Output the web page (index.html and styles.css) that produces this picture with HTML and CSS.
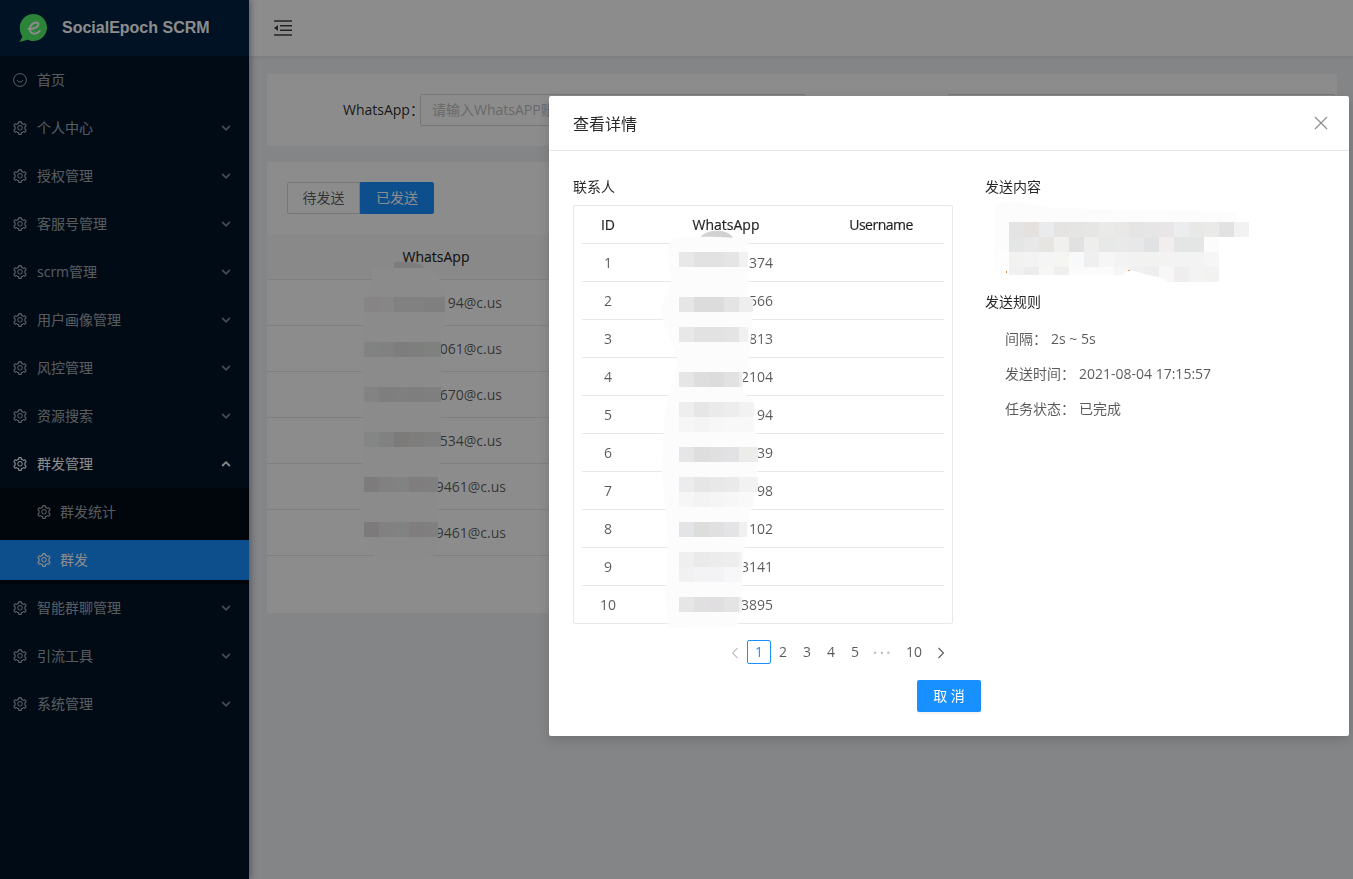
FILE: index.html
```html
<!DOCTYPE html>
<html lang="en">
<head>
    <meta charset="UTF-8">
    <title>SocialEpoch SCRM</title>
    <link rel="stylesheet" href="styles.css">
</head>
<body>

    <svg class="icon-defs" width="0" height="0">
        <symbol id="gear" viewBox="64 64 896 896">
            <path fill="currentColor" d="M924.8 625.7l-65.500-56c3.100-19 4.700-38.400 4.700-57.800s-1.600-38.800-4.700-57.800l65.500-56a32.030 32.030 0 0 0 9.300-35.200l-.9-2.600a443.740 443.740 0 0 0-79.700-137.900l-1.800-2.100a32.120 32.120 0 0 0-35.100-9.500l-81.300 28.900c-30-24.600-63.500-44-99.700-57.600l-15.700-85a32.050 32.050 0 0 0-25.800-25.700l-2.700-.5c-52.100-9.400-106.900-9.400-159 0l-2.700.5a32.050 32.050 0 0 0-25.800 25.700l-15.800 85.400a351.860 351.860 0 0 0-99 57.400l-81.900-29.100a32 32 0 0 0-35.100 9.500l-1.800 2.100a446.020 446.020 0 0 0-79.700 137.900l-.9 2.600c-4.500 12.500-.8 26.500 9.300 35.200l66.300 56.600c-3.100 18.800-4.600 38-4.600 57.100 0 19.200 1.500 38.400 4.600 57.100L99 625.500a32.030 32.030 0 0 0-9.300 35.200l.9 2.600c18.100 50.400 44.900 96.900 79.700 137.900l1.800 2.100a32.120 32.120 0 0 0 35.100 9.500l81.900-29.100c29.800 24.500 63.100 43.900 99 57.400l15.800 85.400a32.050 32.050 0 0 0 25.800 25.700l2.700.5a449.400 449.400 0 0 0 159 0l2.700-.5a32.050 32.050 0 0 0 25.800-25.700l15.700-85a350 350 0 0 0 99.700-57.600l81.300 28.900a32 32 0 0 0 35.100-9.500l1.800-2.100c34.800-41.100 61.600-87.500 79.700-137.900l.9-2.600c4.500-12.300.8-26.300-9.300-35zM788.300 465.900c2.500 15.100 3.800 30.600 3.800 46.100s-1.300 31-3.800 46.100l-6.600 40.100 74.700 63.900a370.030 370.030 0 0 1-42.600 73.600L721 702.800l-31.400 25.800c-23.900 19.600-50.500 35-79.300 45.800l-38.100 14.300-17.900 97a377.500 377.500 0 0 1-85 0l-17.900-97.200-37.800-14.500c-28.500-10.800-55-26.200-78.700-45.700l-31.400-25.900-93.400 33.200c-17-22.900-31.200-47.600-42.600-73.600l75.500-64.500-6.500-40c-2.400-14.900-3.700-30.300-3.700-45.500 0-15.300 1.200-30.600 3.700-45.500l6.500-40-75.500-64.500c11.300-26.100 25.600-50.700 42.600-73.600l93.400 33.200 31.400-25.900c23.700-19.500 50.200-34.900 78.700-45.700l37.900-14.300 17.900-97.200c28.100-3.200 56.800-3.200 85 0l17.900 97 38.100 14.300c28.700 10.800 55.400 26.200 79.300 45.800l31.400 25.800 92.800-32.900c17 22.900 31.200 47.600 42.600 73.600L781.800 426l6.500 39.900zM512 326c-97.200 0-176 78.800-176 176s78.800 176 176 176 176-78.800 176-176-78.800-176-176-176zm79.200 255.200A111.600 111.600 0 0 1 512 614c-29.900 0-58-11.700-79.200-32.800A111.600 111.600 0 0 1 400 502c0-29.900 11.700-58 32.800-79.200C454 401.600 482.100 390 512 390c29.900 0 58 11.600 79.200 32.800A111.600 111.600 0 0 1 624 502c0 29.900-11.700 58-32.800 79.200z"/>
        </symbol>
        <symbol id="chev-down" viewBox="0 0 10 10">
            <path d="M1.200 3 5 6.800 8.800 3" fill="none" stroke="currentColor" stroke-width="1.800"/>
        </symbol>
    </svg>

    <div class="app">
        <!-- Sidebar -->
        <aside class="sidebar">
            <div class="logo">
                <svg class="logo-mark" viewBox="0 0 30 30" width="30" height="30">
                    <path d="M15.500 1C23 1 29 7 29 14.500S23 28 15.500 28c-2.200 0-4-.4-5.700-1.200L1.500 29l3-5.500C2.600 21 1.800 17.800 1.800 14.500 1.800 7 8 1 15.500 1z" fill="#50ee6a"/>
                    <path d="M10.500 15.800c2.500.6 5.500-.1 7.800-1.600 2.300-1.600 2.700-3.500 1.300-4.400-2-1.200-5.800.5-7.300 3.800-1.400 3.300.2 7 3.800 7.100 2.200 0 4.300-1 5.600-2.700" fill="none" stroke="#fff" stroke-width="2" stroke-linecap="round"/>
                </svg>
                <span class="logo-text">SocialEpoch SCRM</span>
            </div>
            <ul class="menu">
                <li class="menu-item">
                    <svg class="menu-icon" viewBox="0 0 14 14"><circle cx="7" cy="7" r="6.400" fill="none" stroke="currentColor" stroke-width="1"/><path d="M4.300 7.200c.6 2.400 4.800 2.400 5.400 0" fill="none" stroke="currentColor" stroke-width="1"/></svg>
                    <span>首页</span>
                </li>
                <li class="menu-item"><svg class="menu-icon"><use href="#gear"/></svg><span>个人中心</span><svg class="chev"><use href="#chev-down"/></svg></li>
                <li class="menu-item"><svg class="menu-icon"><use href="#gear"/></svg><span>授权管理</span><svg class="chev"><use href="#chev-down"/></svg></li>
                <li class="menu-item"><svg class="menu-icon"><use href="#gear"/></svg><span>客服号管理</span><svg class="chev"><use href="#chev-down"/></svg></li>
                <li class="menu-item"><svg class="menu-icon"><use href="#gear"/></svg><span>scrm管理</span><svg class="chev"><use href="#chev-down"/></svg></li>
                <li class="menu-item"><svg class="menu-icon"><use href="#gear"/></svg><span>用户画像管理</span><svg class="chev"><use href="#chev-down"/></svg></li>
                <li class="menu-item"><svg class="menu-icon"><use href="#gear"/></svg><span>风控管理</span><svg class="chev"><use href="#chev-down"/></svg></li>
                <li class="menu-item"><svg class="menu-icon"><use href="#gear"/></svg><span>资源搜索</span><svg class="chev"><use href="#chev-down"/></svg></li>
                <li class="menu-item open"><svg class="menu-icon"><use href="#gear"/></svg><span>群发管理</span><svg class="chev up"><use href="#chev-down"/></svg></li>
                <li class="submenu">
                    <div class="sub-item"><svg class="menu-icon"><use href="#gear"/></svg><span>群发统计</span></div>
                    <div class="sub-item selected"><svg class="menu-icon"><use href="#gear"/></svg><span>群发</span></div>
                </li>
                <li class="menu-item"><svg class="menu-icon"><use href="#gear"/></svg><span>智能群聊管理</span><svg class="chev"><use href="#chev-down"/></svg></li>
                <li class="menu-item"><svg class="menu-icon"><use href="#gear"/></svg><span>引流工具</span><svg class="chev"><use href="#chev-down"/></svg></li>
                <li class="menu-item"><svg class="menu-icon"><use href="#gear"/></svg><span>系统管理</span><svg class="chev"><use href="#chev-down"/></svg></li>
            </ul>
        </aside>

        <!-- Main area -->
        <div class="main">
            <header class="topbar">
                <svg class="fold-icon" viewBox="0 0 18 16" width="18" height="16">
                    <path d="M0 1h18M6 5.700h12M6 10.300h12M0 15h18" stroke="currentColor" stroke-width="1.600"/>
                    <path d="M0 8l4-3v6z" fill="currentColor"/>
                </svg>
            </header>
            <div class="content">
                <section class="card search-card">
                    <label class="search-label">WhatsApp：</label>
                    <div class="search-input">请输入WhatsAPP账号</div>
                    <div class="search-input second"></div>
                </section>
                <section class="card list-card">
                    <div class="btn-group">
                        <span class="tab">待发送</span>
                        <span class="tab active">已发送</span>
                    </div>
                    <div class="list-table">
                        <div class="list-head"><span>WhatsApp</span></div>
                        <div class="list-row"><span>94@c.us</span></div>
                        <div class="list-row"><span>061@c.us</span></div>
                        <div class="list-row"><span>670@c.us</span></div>
                        <div class="list-row"><span>534@c.us</span></div>
                        <div class="list-row long"><span>9461@c.us</span></div>
                        <div class="list-row long"><span>9461@c.us</span></div>
                    </div>
                </section>
            </div>
        </div>
    </div>

    <!-- Blurred-out numbers of the list behind the dialog, drawn in page coordinates -->
    <svg class="redact" width="1353" height="879" viewBox="0 0 1353 879">
        <path d="M372 268L432 268 440 278 445 297 445 325 441 330 441 460 438 470 438 555 428 556Q405 566 374 556L364 540 360 515 364 400 361 350 364 320 372 280Z" fill="#fdfdfd"/>
        <path d="M394 268V262H410Q420 263 425 268Z" fill="#e2e2e2"/>
        <g id="list-mosaic"></g>
    </svg>

    <div class="overlay"></div>

    <!-- Details dialog -->
    <div class="modal">
        <div class="modal-header">
            <span class="modal-title">查看详情</span>
            <svg class="modal-close" viewBox="0 0 14 14" width="14" height="14"><path d="M1 1l12 12M13 1L1 13" stroke="currentColor" stroke-width="1.200"/></svg>
        </div>
        <div class="modal-body">
            <div class="contacts">
                <div class="section-title">联系人</div>
                <div class="contact-box">
                    <table class="contact-table">
                        <thead>
                            <tr><th class="col-id">ID</th><th class="col-wa">WhatsApp</th><th class="col-user">Username</th></tr>
                        </thead>
                        <tbody>
                            <tr><td>1</td><td class="num">374</td><td></td></tr>
                            <tr><td>2</td><td class="num">566</td><td></td></tr>
                            <tr><td>3</td><td class="num">813</td><td></td></tr>
                            <tr><td>4</td><td class="num">2104</td><td></td></tr>
                            <tr><td>5</td><td class="num">94</td><td></td></tr>
                            <tr><td>6</td><td class="num">39</td><td></td></tr>
                            <tr><td>7</td><td class="num">98</td><td></td></tr>
                            <tr><td>8</td><td class="num">102</td><td></td></tr>
                            <tr><td>9</td><td class="num">3141</td><td></td></tr>
                            <tr><td>10</td><td class="num">3895</td><td></td></tr>
                        </tbody>
                    </table>
                </div>
                <div class="pager">
                    <svg class="pager-arrow off" viewBox="0 0 10 12" width="10" height="12"><path d="M7.500 1 2.500 6l5 5" fill="none" stroke="currentColor" stroke-width="1.100"/></svg>
                    <span class="page current">1</span>
                    <span class="page">2</span>
                    <span class="page">3</span>
                    <span class="page">4</span>
                    <span class="page">5</span>
                    <span class="page dots">•••</span>
                    <span class="page wide">10</span>
                    <svg class="pager-arrow" viewBox="0 0 10 12" width="10" height="12"><path d="M2.500 1l5 5-5 5" fill="none" stroke="currentColor" stroke-width="1.100"/></svg>
                </div>
            </div>
            <div class="details">
                <div class="section-title">发送内容</div>
                <div class="content-preview"></div>
                <div class="section-title">发送规则</div>
                <div class="rule">间隔：<span class="rule-value">2s ~ 5s</span></div>
                <div class="rule">发送时间：<span class="rule-value">2021-08-04 17:15:57</span></div>
                <div class="rule">任务状态：<span class="rule-value">已完成</span></div>
            </div>
        </div>
        <div class="modal-footer">
            <button class="btn-primary">取 消</button>
        </div>
    </div>

    <!-- Blurred-out phone numbers and message text, drawn in page coordinates -->
    <svg class="redact" width="1353" height="879" viewBox="0 0 1353 879">
        <path d="M700 238C705 229 728 228 733 238Z" fill="#d2d2d2"/>
        <path d="M672 238C690 236 735 236 748 240L748 300 753 310 750 350 748 366 743 372 743 392 752 400 758 460 755 495 751 510 745 545 742 590 737 627 668 628 665 600 668 540 662 470 665 410 678 360 660 312 672 280 667 250Z" fill="#fcfcfc"/>
        <path d="M994 207C1000 200 1015 201 1053 208L1235 212 1237 222 994 222Z" fill="#fcfcfc"/>
        <g id="modal-mosaic"></g>
        <path d="M994 275H1122L1130 270 1165 279V284H994Z" fill="#fff"/>
        <rect x="1006" y="271" width="1" height="2" fill="#e08a3c"/>
        <rect x="1128" y="270" width="2" height="1" fill="#e0a03c"/>
    </svg>

    <script src="mosaic.js"></script>
</body>
</html>
```

FILE: styles.css
```css
/* Global Styles */
* {
    box-sizing: border-box;
}

body, html {
    margin: 0;
    padding: 0;
    height: 100%;
    overflow: hidden;
    font-family: "Open Sans", "Noto Sans CJK SC", sans-serif;
    font-size: 14px;
    color: rgba(0, 0, 0, 0.65);
    background-color: #f0f2f5;
}

.icon-defs {
    position: absolute;
}

.app {
    display: flex;
    height: 879px;
}

/* Sidebar */
.sidebar {
    position: relative;
    width: 249px;
    flex-shrink: 0;
    background-color: #001529;
    color: rgba(255, 255, 255, 0.65);
    box-shadow: 2px 0 6px rgba(0, 21, 41, 0.35);
}

.logo {
    display: flex;
    align-items: center;
    height: 56px;
    padding-left: 18px;
    background-color: #002140;
}

.logo-mark {
    margin-right: 14px;
}

.logo-text {
    font-family: "Liberation Sans", Arial, sans-serif;
    font-size: 16px;
    font-weight: 700;
    color: #fff;
}

.menu {
    list-style: none;
    margin: 0;
    padding: 4px 0;
}

.menu-item {
    display: flex;
    align-items: center;
    height: 40px;
    margin-bottom: 8px;
    padding: 0 16px 0 13px;
}

.menu-item span,
.sub-item span {
    padding-bottom: 2px;
}

.menu-item.open {
    margin-bottom: 4px;
    color: #fff;
}

.menu-icon {
    width: 14px;
    height: 14px;
    margin-right: 10px;
    flex-shrink: 0;
}

.chev {
    width: 10px;
    height: 10px;
    margin-left: auto;
    margin-right: 2px;
    opacity: 0.75;
}

.chev.up {
    transform: rotate(180deg);
    opacity: 1;
}

.submenu {
    background-color: #000c17;
    padding: 4px 0;
    margin-bottom: 4px;
}

.sub-item {
    display: flex;
    align-items: center;
    height: 40px;
    padding-left: 37px;
}

.sub-item .menu-icon {
    margin-right: 9px;
}

.sub-item + .sub-item {
    margin-top: 8px;
}

.sub-item.selected {
    background-color: #1890ff;
    color: #fff;
}

/* Main area */
.main {
    flex: 1;
    min-width: 0;
}

.topbar {
    display: flex;
    align-items: center;
    height: 56px;
    padding-left: 25px;
    background-color: #fff;
    box-shadow: 0 1px 4px rgba(0, 21, 41, 0.08);
    color: rgba(0, 0, 0, 0.75);
}

.content {
    padding: 18px 16px 0 18px;
}

.card {
    background-color: #fff;
}

.search-card {
    display: flex;
    align-items: flex-start;
    height: 72px;
    padding: 20px 0 0 76px;
    margin-bottom: 16px;
}

.search-label {
    width: 77px;
    white-space: nowrap;
    line-height: 32px;
    color: rgba(0, 0, 0, 0.85);
}

.search-input {
    width: 385px;
    height: 32px;
    padding-left: 11px;
    line-height: 30px;
    border: 1px solid #d9d9d9;
    border-radius: 2px;
    color: #bfbfbf;
    white-space: nowrap;
    overflow: hidden;
}

.search-input.second {
    margin-left: 143px;
    width: 387px;
}

.list-card {
    height: 451px;
    padding-top: 20px;
}

.btn-group {
    display: flex;
    margin-left: 20px;
    height: 32px;
}

.tab {
    width: 73px;
    line-height: 30px;
    text-align: center;
    border: 1px solid #d9d9d9;
    border-radius: 2px 0 0 2px;
}

.tab.active {
    width: 74px;
    background-color: #1890ff;
    border-color: #1890ff;
    border-radius: 0 2px 2px 0;
    color: #fff;
}

.list-table {
    margin-top: 21px;
}

.list-head {
    height: 45px;
    line-height: 44px;
    background-color: #fafafa;
    border-bottom: 1px solid #e8e8e8;
    color: rgba(0, 0, 0, 0.85);
    -webkit-text-stroke: 0.2px;
}

.list-head span {
    display: block;
    width: 338px;
    text-align: center;
}

.list-row {
    height: 46px;
    line-height: 45px;
    border-bottom: 1px solid #e8e8e8;
}

.list-row span {
    display: block;
    width: 235px;
    text-align: right;
}

.list-row.long span {
    width: 239px;
}

.redact {
    position: absolute;
    left: 0;
    top: 0;
    pointer-events: none;
}

.overlay {
    position: fixed;
    top: 0;
    left: 0;
    right: 0;
    bottom: 0;
    background-color: rgba(0, 0, 0, 0.45);
}

/* Dialog */
.modal {
    position: absolute;
    left: 549px;
    top: 96px;
    width: 800px;
    height: 640px;
    background-color: #fff;
    border-radius: 2px;
    box-shadow: 0 4px 12px rgba(0, 0, 0, 0.15);
}

.modal-header {
    display: flex;
    align-items: center;
    justify-content: space-between;
    height: 55px;
    padding: 0 21px 0 24px;
    border-bottom: 1px solid #e8e8e8;
}

.modal-title {
    font-size: 16px;
    color: rgba(0, 0, 0, 0.85);
}

.modal-close {
    color: rgba(0, 0, 0, 0.45);
}

.modal-body {
    display: flex;
    gap: 32px;
    padding: 25px 24px 0;
}

.section-title {
    line-height: 22px;
    color: rgba(0, 0, 0, 0.85);
}

.contacts {
    width: 380px;
}

.contact-box {
    margin-top: 7px;
    padding: 0 8px;
    border: 1px solid #e8e8e8;
    border-radius: 2px;
}

.contact-table {
    width: 100%;
    border-collapse: separate;
    border-spacing: 0;
    table-layout: fixed;
}

.contact-table th,
.contact-table td {
    height: 38px;
    padding: 0;
    text-align: center;
    font-size: 14px;
    border-bottom: 1px solid #e8e8e8;
}

.contact-table tr:last-child td {
    height: 37px;
    border-bottom: none;
}

.contact-table th {
    color: rgba(0, 0, 0, 0.85);
    font-weight: 400;
    -webkit-text-stroke: 0.2px;
}

.col-id {
    width: 52px;
}

.col-wa {
    width: 184px;
}

.contact-table .col-user {
    letter-spacing: -0.5px;
}

.contact-table td.num {
    padding-right: 45px;
    text-align: right;
}

.pager {
    display: flex;
    align-items: center;
    justify-content: flex-end;
    height: 24px;
    margin-top: 16px;
}

.page {
    min-width: 24px;
    height: 24px;
    line-height: 22px;
    text-align: center;
    border: 1px solid transparent;
    border-radius: 2px;
}

.page.current {
    border-color: #1890ff;
    color: #1890ff;
}

.page.dots {
    width: 32px;
    padding-top: 1px;
    font-size: 11px;
    letter-spacing: 2.500px;
    color: rgba(0, 0, 0, 0.25);
}

.page.wide {
    width: 30px;
}

.pager-arrow {
    margin: 1px 7px 0;
    color: rgba(0, 0, 0, 0.65);
}

.pager-arrow.off {
    color: rgba(0, 0, 0, 0.25);
}

.details {
    flex: 1;
}

.content-preview {
    height: 93px;
}

.rule {
    margin-left: 20px;
    margin-top: 13px;
    line-height: 22px;
    color: rgba(0, 0, 0, 0.65);
}

.section-title + .rule {
    margin-top: 15px;
}

.rule-value {
    margin-left: 4px;
}

.modal-footer {
    position: absolute;
    left: 0;
    right: 0;
    bottom: 24px;
    text-align: center;
}

.btn-primary {
    width: 64px;
    height: 32px;
    padding: 0 0 2px;
    border: none;
    border-radius: 2px;
    background-color: #1890ff;
    color: #fff;
    font-family: inherit;
    font-size: 14px;
    box-shadow: 0 2px 0 rgba(0, 0, 0, 0.045);
}
```

FILE: mosaic.js
```js
// Draws the pixelated blocks that hide numbers and message text.
// Each strip: [left, top, width of the last cell, colours of the 15px cells]
const listStrips = [
    [364, 297, 6, ['f6f1f3', 'f4f4f4', 'ececec', 'ececec', 'e7e8e8', 'e7e8e8']],
    [364, 342, 2, ['eceeee', 'ececec', 'e4e4e4', 'e6e6e4', 'e8eaea', 'e8eaea']],
    [364, 387, 2, ['eeeeee', 'e6e6e6', 'e8e8e8', 'e6e6e6', 'e8e8e8', 'e8e8e8']],
    [364, 432, 2, ['f0f2f2', 'ececec', 'e2e0de', 'e4e4e2', 'e8e8e8', 'e8e8e8']],
    [364, 477, 14, ['e4e0e0', 'ebebeb', 'ecefef', 'e8e4e4', 'e8e8e8']],
    [364, 522, 14, ['e2dedf', 'ebebeb', 'ecefef', 'e8e3e4', 'e8e8e8']]
];

const modalStrips = [
    // contact numbers
    [679, 252, 9, ['e8e8e8', 'e2e2e2', 'e2e2e2', 'e5e5e5', 'f2f2f2']],
    [679, 297, 14, ['e6e6e6', 'dcdcdc', 'dcdcdc', 'e4e4e4', 'eeeeee']],
    [679, 327, 9, ['e8e8e8', 'e2e2e2', 'e2e2e2', 'e4e4e4', 'f0f0f0']],
    [679, 372, 3, ['e6e6e6', 'dedede', 'dcdcdc', 'e2e2e2', 'ececec']],
    [679, 402, 15, ['eeeeee', 'e6e6e6', 'eaeaea', 'ededed', 'f2f2f2']],
    [679, 417, 15, ['f6f6f6', 'f4f4f4', 'f7f7f7', 'f8f8f8', 'f8f8f8']],
    [679, 447, 19, ['e6e6e8', 'dedede', 'e0e0e0', 'e2e2e4', 'ececea']],
    [679, 477, 19, ['ececee', 'e6e6e6', 'e8e8e8', 'eaeaea', 'f2f2f2']],
    [679, 492, 14, ['f6f6f6', 'f3f3f3', 'f5f5f5', 'f7f7f7', 'f9f9f9']],
    [679, 522, 8, ['e4e4e6', 'dcdedc', 'e0e0e0', 'e4e4e6', 'f0f0f0']],
    [679, 552, 3, ['efefef', 'eaeaea', 'ececec', 'ededed', 'f2f2f2']],
    [679, 567, 3, ['f1f1f1', 'f3f3f5', 'f3f3f5', 'f7f7f9', 'f7f7f9']],
    [679, 597, 3, ['e6e6e6', 'e0e0e0', 'e0dee0', 'e4e4e4', 'f0f0f0']],
    // message preview
    [994, 222, 15, ['fcfcfc', 'e4e4e4', 'e4e1df', 'eaebed', 'e6e4e3', 'e5e5e3', 'e6e6e4', 'eaeae8', 'e9e8e6', 'e6e5e5', 'e6e6e6', 'e8e6e6', 'ecedee', 'e8e8e6', 'eaeae8', 'e2e2e2', 'f2f2f2']],
    [994, 237, 15, ['fcfcfc', 'e4e5e5', 'e8e8e8', 'e6e5e1', 'f0f0ee', 'e1e1e1', 'eeeeec', 'e7e8e8', 'e9e9e9', 'e8e8e8', 'e0e2e4', 'f2eeee', 'e4e5e5', 'e4e5e5', 'fcfcfc']],
    [994, 252, 15, ['fdfdfd', 'f2f2f0', 'f3f3f3', 'f5f5f5', 'f5f6f2', 'f8f9fb', 'efefef', 'f6f6f6', 'f3f3f3', 'f2f2f2', 'f2f2f1', 'f4f3f3', 'f3f3f3', 'f3f3f3', 'f6f6f6']],
    [994, 267, 15, ['fefefe', 'f0f0f0', 'ececec', 'f7f7f5', 'efefed', 'fbfbfb', 'fbfbfb', 'fbfbfb', 'f6f6f6', 'f0f0f0', 'eeeeee', 'f7f7f7', 'efedee', 'f3f3f3', 'f2f2f0']]
];

function drawStrips(groupId, strips) {
    const group = document.getElementById(groupId);
    for (const [left, top, lastWidth, cells] of strips) {
        cells.forEach((colour, i) => {
            const rect = document.createElementNS('http://www.w3.org/2000/svg', 'rect');
            rect.setAttribute('x', left + i * 15);
            rect.setAttribute('y', top);
            rect.setAttribute('width', i === cells.length - 1 ? lastWidth : 15);
            rect.setAttribute('height', 15);
            rect.setAttribute('fill', '#' + colour);
            group.appendChild(rect);
        });
    }
}

drawStrips('list-mosaic', listStrips);
drawStrips('modal-mosaic', modalStrips);
```
